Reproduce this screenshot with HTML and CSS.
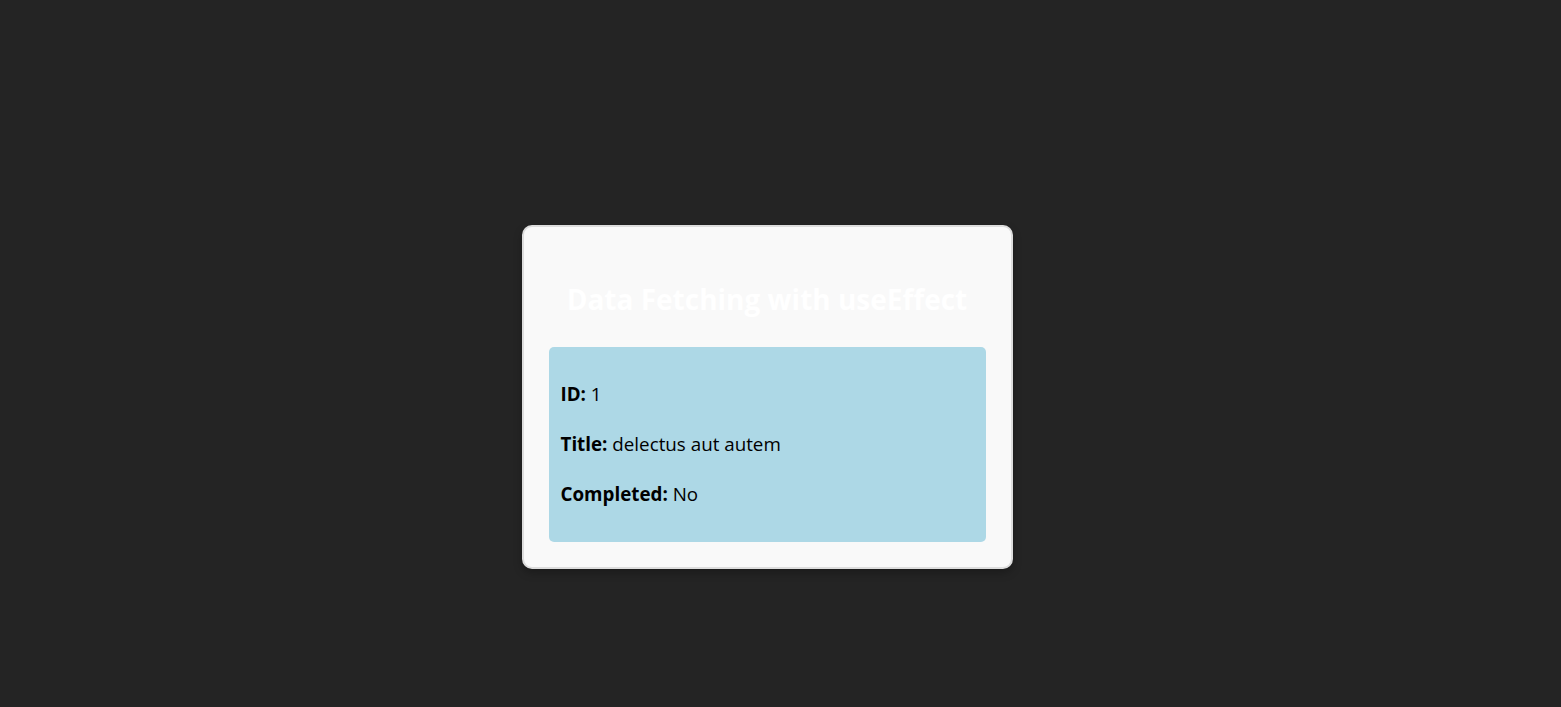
FILE: index.html
```html
<!DOCTYPE html>
<html lang="en">
<head>
<meta charset="utf-8">
<title>Data Fetching with useEffect</title>
<link rel="stylesheet" href="styles.css">
</head>
<body>
<main class="page">
  <section class="card">
    <h2 class="card-title">Data Fetching with useEffect</h2>
    <div class="todo">
      <p class="todo-row"><strong>ID:</strong> 1</p>
      <p class="todo-row"><strong>Title:</strong> delectus aut autem</p>
      <p class="todo-row"><strong>Completed:</strong> No</p>
    </div>
  </section>
</main>
</body>
</html>
```

FILE: styles.css
```css
html, body {
  margin: 0;
  padding: 0;
}

body {
  background: #242424;
  color: rgba(255, 255, 255, 0.87);
  font-family: "Open Sans", "Noto Sans", sans-serif;
  font-size: 18.8px;
  line-height: 1.5;
  min-height: 100vh;
}

.page {
  display: flex;
  justify-content: center;
  align-items: flex-start;
  padding: 225px 27px 0 0;
}

.card {
  width: 437px;
  padding: 25px;
  background: #f9f9f9;
  border: 2px solid #dddddd;
  border-radius: 10px;
  box-shadow: 0 4px 8px rgba(0, 0, 0, 0.25);
}

.card-title {
  margin: 25px 0;
  font-size: 28px;
  line-height: 45px;
  font-weight: 700;
  text-align: center;
  color: #ffffff;
}

.todo {
  background: #add8e6;
  border-radius: 5px;
  padding: 12px 12px 13px;
  color: #000000;
}

.todo-row {
  margin: 20px 0;
  line-height: 30px;
}

.todo-row strong {
  font-weight: 700;
}
```
